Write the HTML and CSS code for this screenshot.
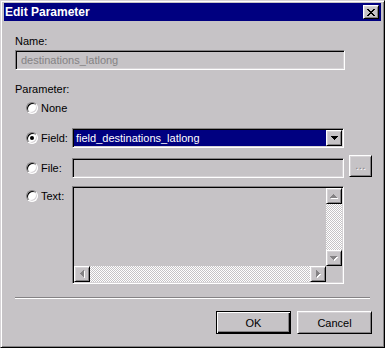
FILE: index.html
```html
<!DOCTYPE html>
<html lang="en">
<head>
    <meta charset="UTF-8">
    <meta name="viewport" content="width=device-width, initial-scale=1.0">
    <title>Edit Parameter</title>
    <link rel="stylesheet" href="styles.css">
</head>
<body>
    <div class="window">
        <div class="titlebar">
            <span class="title">Edit Parameter</span>
            <span class="close-btn">
                <svg width="8" height="7" viewBox="0 0 8 7"><path fill="#000" d="M0 0h2v1h-2z M6 0h2v1h-2z M1 1h2v1h-2z M5 1h2v1h-2z M2 2h4v1h-4z M3 3h2v1h-2z M2 4h4v1h-4z M1 5h2v1h-2z M5 5h2v1h-2z M0 6h2v1h-2z M6 6h2v1h-2z"/></svg>
            </span>
        </div>

        <div class="content">
            <label class="caption">Name:</label>
            <div class="edit disabled name-edit">destinations_latlong</div>

            <label class="caption param-caption">Parameter:</label>
            <div class="options">
                <div class="opt-row">
                    <label class="opt"><span class="radio"></span>None</label>
                </div>

                <div class="opt-row">
                    <label class="opt"><span class="radio checked"></span>Field:</label>
                    <div class="combo">
                        <span class="combo-value">field_destinations_latlong</span>
                        <span class="btn3d combo-btn">
                            <svg width="7" height="4" viewBox="0 0 7 4"><path fill="#000" d="M0 0h7v1h-1v1h-1v1h-1v1h-1v-1h-1v-1h-1v-1h-1z"/></svg>
                        </span>
                    </div>
                </div>

                <div class="opt-row file-row">
                    <label class="opt"><span class="radio"></span>File:</label>
                    <div class="edit disabled file-edit"></div>
                    <span class="btn3d browse-btn">...</span>
                </div>

                <div class="opt-row text-row">
                    <label class="opt"><span class="radio"></span>Text:</label>
                    <div class="memo">
                        <div class="memo-area"></div>
                        <div class="vscroll">
                            <span class="btn3d scroll-btn">
                                <svg width="8" height="5" viewBox="0 0 8 5"><path fill="#fff" transform="translate(1 1)" d="M3 0h1v1h1v1h1v1h1v1h-7v-1h1v-1h1v-1h1z"/><path fill="#848284" d="M3 0h1v1h1v1h1v1h1v1h-7v-1h1v-1h1v-1h1z"/></svg>
                            </span>
                            <span class="track"></span>
                            <span class="btn3d scroll-btn">
                                <svg width="8" height="5" viewBox="0 0 8 5"><path fill="#fff" transform="translate(1 1)" d="M0 0h7v1h-1v1h-1v1h-1v1h-1v-1h-1v-1h-1v-1h-1z"/><path fill="#848284" d="M0 0h7v1h-1v1h-1v1h-1v1h-1v-1h-1v-1h-1v-1h-1z"/></svg>
                            </span>
                        </div>
                        <div class="hscroll">
                            <span class="btn3d scroll-btn">
                                <svg width="5" height="8" viewBox="0 0 5 8"><path fill="#fff" transform="translate(1 1)" d="M3 0h1v7h-1v-1h-1v-1h-1v-1h-1v-1h1v-1h1v-1h1z"/><path fill="#848284" d="M3 0h1v7h-1v-1h-1v-1h-1v-1h-1v-1h1v-1h1v-1h1z"/></svg>
                            </span>
                            <span class="track"></span>
                            <span class="btn3d scroll-btn">
                                <svg width="5" height="8" viewBox="0 0 5 8"><path fill="#fff" transform="translate(1 1)" d="M0 0h1v1h1v1h1v1h1v1h-1v1h-1v1h-1v1h-1z"/><path fill="#848284" d="M0 0h1v1h1v1h1v1h1v1h-1v1h-1v1h-1v1h-1z"/></svg>
                            </span>
                        </div>
                        <div class="corner"></div>
                    </div>
                </div>
            </div>

            <div class="separator"></div>

            <div class="actions">
                <button class="push default">OK</button>
                <button class="push">Cancel</button>
            </div>
        </div>
    </div>
</body>
</html>
```

FILE: styles.css
```css
body {
    margin: 0;
    font-family: "Liberation Sans", Arial, sans-serif;
    font-size: 11px;
    line-height: 13px;
    color: #000;
    background-color: #c6c3c6;
}

.window {
    width: 385px;
    height: 348px;
    box-sizing: border-box;
    border: 1px solid;
    border-color: #d6d3d6 #000 #000 #d6d3d6;
    box-shadow: inset 1px 1px 0 #fff, inset -1px -1px 0 #848284;
    padding: 2px 3px;
    background-color: #c6c3c6;
    display: flex;
    flex-direction: column;
}

.titlebar {
    height: 18px;
    background-color: #000080;
    display: flex;
    align-items: center;
    justify-content: space-between;
    padding: 0 2px 0 1px;
}

.title {
    color: #fff;
    font-weight: bold;
    font-size: 12px;
    line-height: 14px;
}

/* raised 3d look, used by small buttons */
.btn3d,
.close-btn {
    box-sizing: border-box;
    display: flex;
    align-items: center;
    justify-content: center;
    background-color: #c6c3c6;
    border: 1px solid;
    border-color: #fff #000 #000 #fff;
    box-shadow: inset 1px 1px 0 #d6d3d6, inset -1px -1px 0 #848284;
}

.close-btn {
    width: 16px;
    height: 14px;
}

.content {
    flex: 1;
    display: flex;
    flex-direction: column;
    padding: 14px 9px 11px 11px;
}

.caption {
    display: block;
    height: 13px;
}

.param-caption {
    margin-top: 13px;
}

/* sunken edit box */
.edit,
.combo,
.memo {
    box-sizing: border-box;
    border: 1px solid;
    border-color: #848284 #fff #fff #848284;
    box-shadow: inset 1px 1px 0 #000, inset -1px -1px 0 #d6d3d6;
}

.edit {
    height: 20px;
    line-height: 18px;
    padding: 0 5px;
}

.edit.disabled {
    background-color: #c6c3c6;
    color: #848284;
}

.name-edit {
    width: 330px;
    margin-top: 2px;
}

.options {
    margin: 2px 0 0 11px;
    display: flex;
    flex-direction: column;
}

.opt-row {
    display: flex;
    align-items: center;
    height: 20px;
    margin-top: 10px;
}

.opt-row:first-child {
    margin-top: 0;
}

.opt {
    width: 46px;
    height: 20px;
    display: flex;
    align-items: center;
    gap: 3px;
    flex-shrink: 0;
}

.radio {
    width: 12px;
    height: 12px;
    box-sizing: border-box;
    border-radius: 50%;
    border: 1px solid;
    border-color: #848284 #fff #fff #848284;
    box-shadow: inset 1px 1px 0 #000, inset -1px -1px 0 #d6d3d6;
    background-color: #fff;
    display: flex;
    align-items: center;
    justify-content: center;
}

.radio.checked::after {
    content: "";
    width: 4px;
    height: 4px;
    border-radius: 50%;
    background-color: #000;
}

.combo {
    width: 272px;
    height: 20px;
    padding: 1px;
    background-color: #fff;
    display: flex;
}

.combo-value {
    flex: 1;
    background-color: #000080;
    color: #fff;
    line-height: 16px;
    padding-left: 2px;
}

.combo-btn {
    width: 16px;
    height: 16px;
}

.file-row {
    align-items: flex-end;
}

.file-edit {
    width: 272px;
}

.browse-btn {
    width: 23px;
    height: 22px;
    margin: -3px 0 1px 5px;
    color: #848284;
    text-shadow: 1px 1px 0 #fff;
    letter-spacing: 0.5px;
    padding-bottom: 2px;
}

.text-row {
    height: auto;
    align-items: flex-start;
    margin-top: 8px;
}

.memo {
    width: 272px;
    height: 98px;
    padding: 1px;
    background-color: #c6c3c6;
    display: grid;
    grid-template-columns: 1fr 16px;
    grid-template-rows: 1fr 16px;
}

.vscroll {
    display: flex;
    flex-direction: column;
}

.hscroll {
    display: flex;
}

.scroll-btn {
    width: 16px;
    height: 16px;
    flex-shrink: 0;
}

.track {
    flex: 1;
    background-image: repeating-conic-gradient(#fff 0% 25%, #c6c3c6 0% 50%);
    background-size: 2px 2px;
}

.corner {
    background-color: #c6c3c6;
}

.separator {
    margin: 13px 2px 0 0;
    border-top: 1px solid #848284;
    border-bottom: 1px solid #fff;
}

.actions {
    margin-top: 12px;
    display: flex;
    justify-content: flex-end;
    gap: 6px;
}

.push {
    width: 75px;
    height: 23px;
    box-sizing: border-box;
    font-family: inherit;
    font-size: 11px;
    color: #000;
    background-color: #c6c3c6;
    border: 1px solid;
    border-color: #fff #000 #000 #fff;
    box-shadow: inset 1px 1px 0 #d6d3d6, inset -1px -1px 0 #848284;
    padding: 0;
}

.push.default {
    border-color: #000;
    box-shadow: inset 1px 1px 0 #fff, inset -1px -1px 0 #000, inset -2px -2px 0 #848284;
}
```
